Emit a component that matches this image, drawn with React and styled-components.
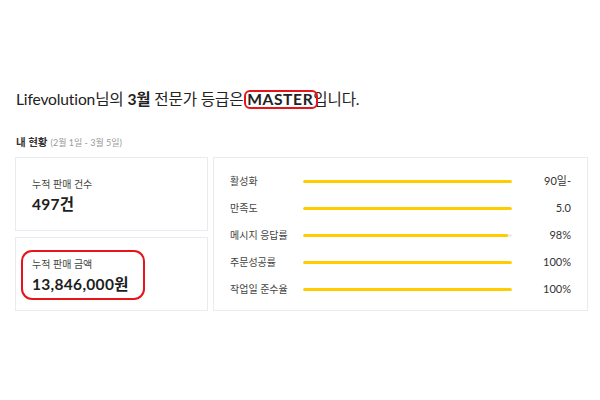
import React from "react";
import styled, { createGlobalStyle } from "styled-components";

const Global = createGlobalStyle`
  html, body { margin: 0; padding: 0; background: #ffffff; }
  body { font-family: "Lato", "Noto Sans CJK KR", sans-serif; color: #1e1e1e; }
`;

const Page = styled.div`
  width: 600px;
  height: 400px;
  box-sizing: border-box;
  padding: 86px 12px 0 15px;
`;

const Heading = styled.h1`
  margin: 0 0 0 1px;
  font-size: 15.6px;
  font-weight: 400;
  line-height: 26px;
  letter-spacing: -0.15px;
  color: #222;
`;

const Bold = styled.b`
  font-weight: 700;
`;

const Highlight = styled.span`
  position: relative;
  font-weight: 700;
  letter-spacing: 0.6px;
  &::after {
    content: "";
    position: absolute;
    left: -3px;
    right: -5px;
    top: 0px;
    bottom: -1px;
    border: 2.5px solid #e8141c;
    border-radius: 6px;
  }
`;

const SectionTitle = styled.div`
  margin: 22px 0 0 1px;
  font-size: 10.5px;
  font-weight: 700;
  line-height: 16px;
  color: #333;
`;

const Period = styled.span`
  font-size: 9px;
  font-weight: 400;
  color: #999;
  margin-left: 3px;
`;

const Grid = styled.div`
  margin-top: 6px;
  display: grid;
  grid-template-columns: 193px 375px;
  column-gap: 5px;
`;

const LeftCol = styled.div`
  display: flex;
  flex-direction: column;
  gap: 6px;
`;

const Card = styled.div`
  position: relative;
  box-sizing: border-box;
  border: 1px solid #e9ebf0;
  background: #fff;
`;

const StatCard = styled(Card)`
  height: 74px;
  padding: 19px 16px 0 16px;
`;

const StatLabel = styled.div`
  font-size: 10px;
  line-height: 14px;
  color: #444;
`;

const StatValue = styled.div`
  margin-top: 3px;
  font-size: 15.5px;
  font-weight: 700;
  line-height: 20px;
  color: #1e1e1e;
  letter-spacing: 0.3px;
`;

const Circled = styled.div`
  position: absolute;
  left: 5px;
  top: 12px;
  width: 124px;
  height: 50px;
  box-sizing: border-box;
  border: 2.5px solid #e8141c;
  border-radius: 11px;
  pointer-events: none;
`;

const MetricCard = styled(Card)`
  height: 154px;
  padding: 16px 16px 0 16px;
  display: flex;
  flex-direction: column;
  gap: 13px;
`;

const Row = styled.div`
  display: grid;
  grid-template-columns: 73px 209px 1fr;
  align-items: center;
  height: 14px;
`;

const RowLabel = styled.div`
  font-size: 10px;
  line-height: 14px;
  color: #444;
`;

const Track = styled.div`
  height: 3px;
  border-radius: 2px;
  background: #eeeeee;
  overflow: hidden;
`;

const Fill = styled.div`
  height: 100%;
  border-radius: 2px;
  background: #ffcc00;
`;

const RowValue = styled.div`
  text-align: right;
  font-size: 11px;
  line-height: 14px;
  color: #333;
`;

const metrics = [
  { label: "활성화", pct: 100, value: "90일-" },
  { label: "만족도", pct: 100, value: "5.0" },
  { label: "메시지 응답률", pct: 98, value: "98%" },
  { label: "주문성공률", pct: 100, value: "100%" },
  { label: "작업일 준수율", pct: 100, value: "100%" },
];

export default function App() {
  return (
    <>
      <Global />
      <Page>
        <Heading>
          Lifevolution님의 <Bold>3월</Bold> 전문가 등급은 <Highlight>MASTER</Highlight>입니다.
        </Heading>
        <SectionTitle>
          내 현황<Period>(2월 1일 - 3월 5일)</Period>
        </SectionTitle>
        <Grid>
          <LeftCol>
            <StatCard>
              <StatLabel>누적 판매 건수</StatLabel>
              <StatValue>497건</StatValue>
            </StatCard>
            <StatCard>
              <StatLabel>누적 판매 금액</StatLabel>
              <StatValue>13,846,000원</StatValue>
              <Circled />
            </StatCard>
          </LeftCol>
          <MetricCard>
            {metrics.map((m) => (
              <Row key={m.label}>
                <RowLabel>{m.label}</RowLabel>
                <Track>
                  <Fill style={{ width: `${m.pct}%` }} />
                </Track>
                <RowValue>{m.value}</RowValue>
              </Row>
            ))}
          </MetricCard>
        </Grid>
      </Page>
    </>
  );
}
